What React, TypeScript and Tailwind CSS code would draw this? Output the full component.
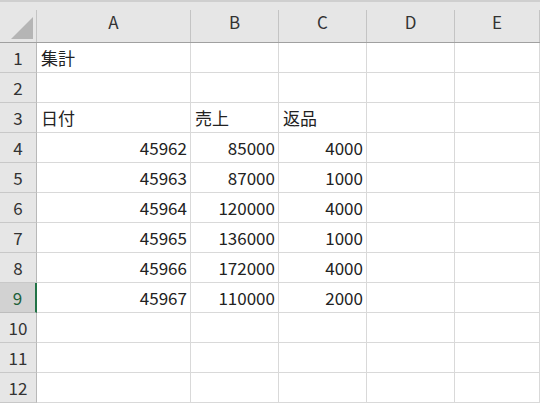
import React from 'react';

type Cell = { text: string; num?: boolean };

const COLS = [
  { id: 'A', w: 'w-[154px]' },
  { id: 'B', w: 'w-[88px]' },
  { id: 'C', w: 'w-[88px]' },
  { id: 'D', w: 'w-[88px]' },
  { id: 'E', w: 'flex-1' },
];

const ROWS: Cell[][] = [
  [{ text: '集計' }],
  [],
  [{ text: '日付' }, { text: '売上' }, { text: '返品' }],
  [{ text: '45962', num: true }, { text: '85000', num: true }, { text: '4000', num: true }],
  [{ text: '45963', num: true }, { text: '87000', num: true }, { text: '1000', num: true }],
  [{ text: '45964', num: true }, { text: '120000', num: true }, { text: '4000', num: true }],
  [{ text: '45965', num: true }, { text: '136000', num: true }, { text: '1000', num: true }],
  [{ text: '45966', num: true }, { text: '172000', num: true }, { text: '4000', num: true }],
  [{ text: '45967', num: true }, { text: '110000', num: true }, { text: '2000', num: true }],
  [],
  [],
  [],
];

const SELECTED_ROW = 9;

const App: React.FC = () => {
  return (
    <div
      className="w-[540px] h-[405px] overflow-hidden bg-white text-[#222]"
      style={{ fontFamily: '"Noto Sans CJK JP", "Noto Sans", sans-serif' }}
    >
      <div className="h-[2px] bg-[#cfcfcf]" />

      {/* column headers */}
      <div className="flex h-[41px] bg-[#e6e6e6] border-b border-[#a0a0a0]">
        <div className="w-[37px] shrink-0 flex">
          <div className="flex-1 flex items-end justify-end pr-[3px] pb-[3px]">
            <svg width="22" height="22" viewBox="0 0 22 22">
              <polygon points="22,0 22,22 0,22" fill="#b5b5b5" />
            </svg>
          </div>
          <div className="w-px mt-[8px] bg-[#c4c4c4]" />
        </div>
        {COLS.map(c => (
          <div key={c.id} className={`${c.w} shrink-0 flex`}>
            <div className="flex-1 flex items-center justify-center text-[17px] text-[#333]">{c.id}</div>
            <div className="w-px mt-[8px] bg-[#c4c4c4]" />
          </div>
        ))}
      </div>

      {/* rows */}
      {ROWS.map((cells, i) => {
        const n = i + 1;
        const selected = n === SELECTED_ROW;
        return (
          <div key={n} className="flex h-[30px]">
            <div
              className={
                selected
                  ? 'w-[37px] shrink-0 bg-[#d2d2d2] border-b border-[#bdbdbd] border-r-2 border-r-[#217346] flex items-center justify-center text-[17px] text-[#20603a]'
                  : 'w-[37px] shrink-0 bg-[#e6e6e6] border-b border-[#c8c8c8] border-r border-r-[#b8b8b8] flex items-center justify-center text-[17px] text-[#333]'
              }
            >
              {n}
            </div>
            {COLS.map((c, j) => {
              const cell = cells[j];
              return (
                <div
                  key={c.id}
                  className={`${c.w} shrink-0 border-r border-b border-[#d9d9d9] flex items-center text-[17px] whitespace-nowrap ${
                    cell?.num ? 'justify-end pr-[3px]' : 'justify-start pl-[4px]'
                  }`}
                >
                  {cell?.text}
                </div>
              );
            })}
          </div>
        );
      })}
    </div>
  );
};

export default App;
